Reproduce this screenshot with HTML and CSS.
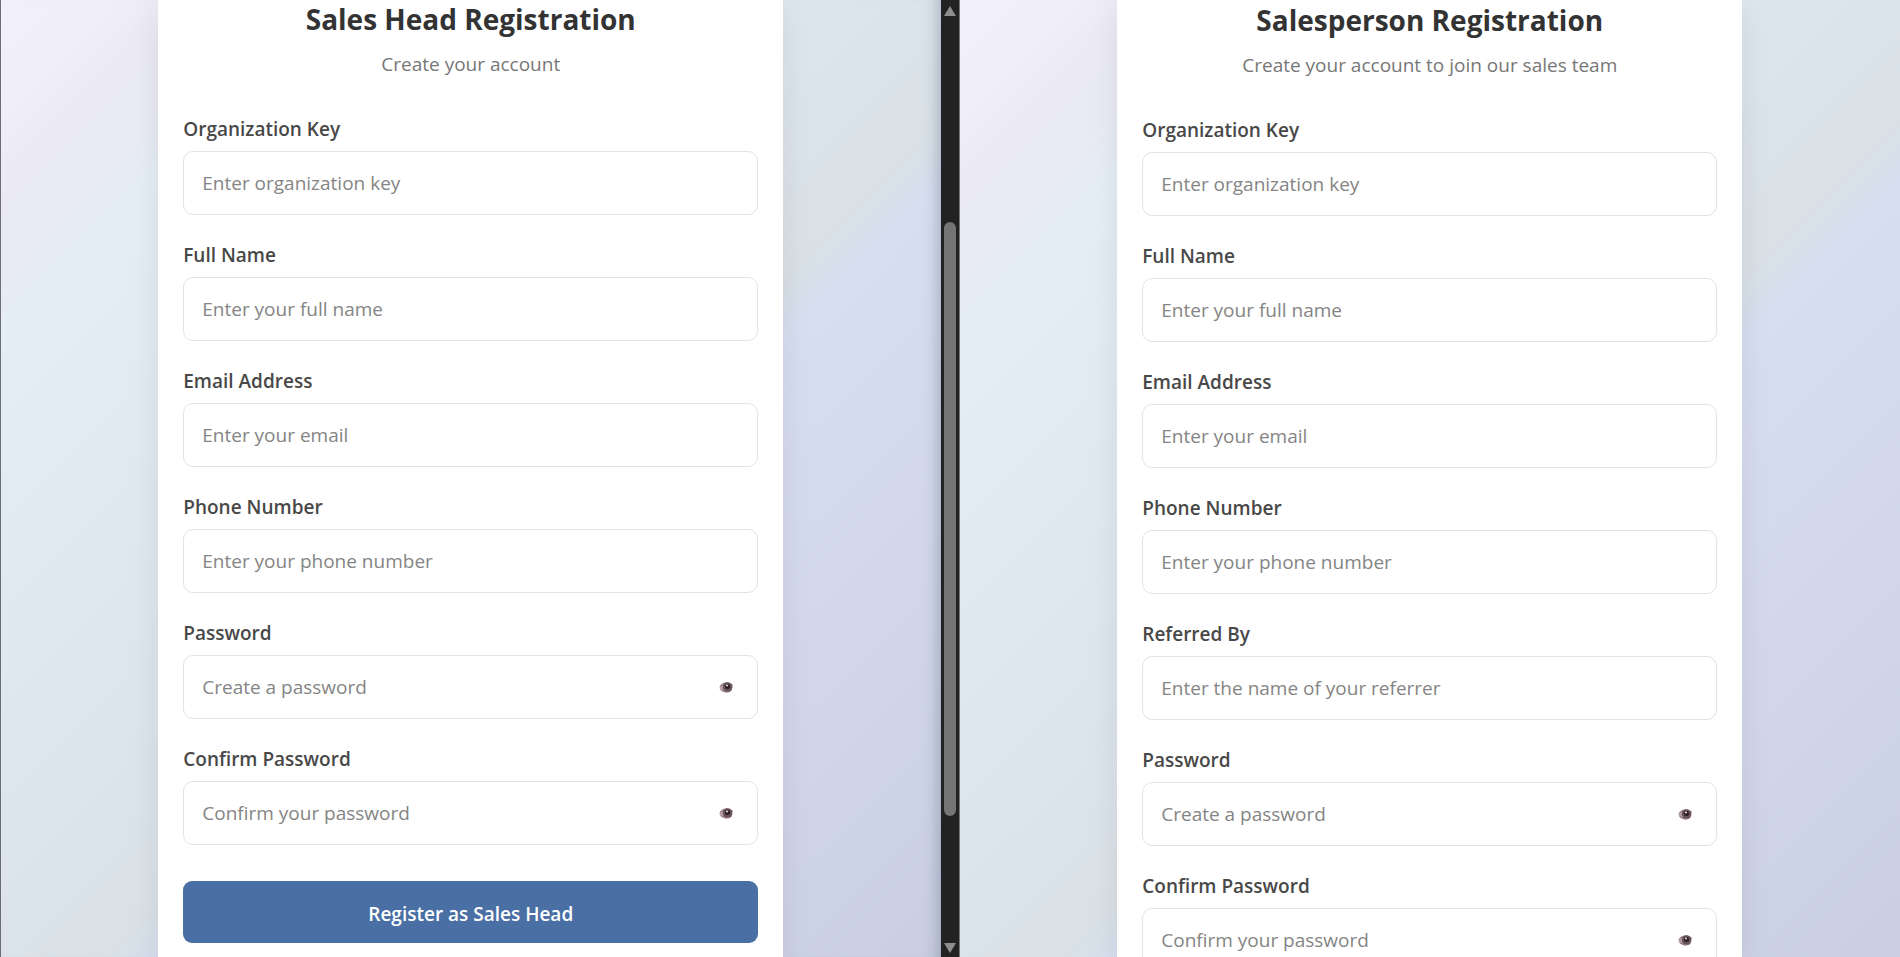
FILE: index.html
```html
<!DOCTYPE html>
<html lang="en">
<head>
<meta charset="utf-8">
<title>Registration</title>
<link rel="stylesheet" href="styles.css">
</head>
<body>
<svg width="0" height="0" class="sprite" aria-hidden="true">
  <symbol id="eye" viewBox="0 0 16 14">
    <ellipse cx="7" cy="7.5" rx="6.5" ry="5" fill="#b9a3a9"/>
    <path d="M1 6.500Q7 0 14 5.500" fill="none" stroke="#8c777e" stroke-width="1"/>
    <circle cx="8.500" cy="7" r="4.800" fill="#69535a"/>
    <circle cx="8.500" cy="6.500" r="2.500" fill="#2c1d24"/>
    <circle cx="8" cy="5.500" r="1" fill="#efe9ec"/>
    <path d="M2 9.500Q7 14 12.500 10.500" fill="none" stroke="#8c6f78" stroke-width="1"/>
  </symbol>
</svg>
<main class="split">
  <section class="pane pane-left">
    <form class="card">
      <h1 class="title">Sales Head Registration</h1>
      <p class="subtitle">Create your account</p>
      <div class="fields">
        <div class="field"><label for="h-org">Organization Key</label><input id="h-org" type="text" placeholder="Enter organization key"></div>
        <div class="field"><label for="h-name">Full Name</label><input id="h-name" type="text" placeholder="Enter your full name"></div>
        <div class="field"><label for="h-email">Email Address</label><input id="h-email" type="email" placeholder="Enter your email"></div>
        <div class="field"><label for="h-phone">Phone Number</label><input id="h-phone" type="tel" placeholder="Enter your phone number"></div>
        <div class="field"><label for="h-pass">Password</label><div class="secret"><input id="h-pass" type="password" placeholder="Create a password"><button type="button" class="toggle" aria-label="Show password"><svg><use href="#eye"/></svg></button></div></div>
        <div class="field"><label for="h-conf">Confirm Password</label><div class="secret"><input id="h-conf" type="password" placeholder="Confirm your password"><button type="button" class="toggle" aria-label="Show password"><svg><use href="#eye"/></svg></button></div></div>
      </div>
      <button type="submit" class="submit">Register as Sales Head</button>
    </form>
  </section>
  <div class="scrollbar" aria-hidden="true">
    <span class="arrow arrow-up"></span>
    <span class="track-top"></span>
    <span class="thumb"></span>
    <span class="track-bottom"></span>
    <span class="arrow arrow-down"></span>
  </div>
  <section class="pane pane-right">
    <form class="card">
      <h1 class="title">Salesperson Registration</h1>
      <p class="subtitle">Create your account to join our sales team</p>
      <div class="fields">
        <div class="field"><label for="s-org">Organization Key</label><input id="s-org" type="text" placeholder="Enter organization key"></div>
        <div class="field"><label for="s-name">Full Name</label><input id="s-name" type="text" placeholder="Enter your full name"></div>
        <div class="field"><label for="s-email">Email Address</label><input id="s-email" type="email" placeholder="Enter your email"></div>
        <div class="field"><label for="s-phone">Phone Number</label><input id="s-phone" type="tel" placeholder="Enter your phone number"></div>
        <div class="field"><label for="s-ref">Referred By</label><input id="s-ref" type="text" placeholder="Enter the name of your referrer"></div>
        <div class="field"><label for="s-pass">Password</label><div class="secret"><input id="s-pass" type="password" placeholder="Create a password"><button type="button" class="toggle" aria-label="Show password"><svg><use href="#eye"/></svg></button></div></div>
        <div class="field"><label for="s-conf">Confirm Password</label><div class="secret"><input id="s-conf" type="password" placeholder="Confirm your password"><button type="button" class="toggle" aria-label="Show password"><svg><use href="#eye"/></svg></button></div></div>
      </div>
    </form>
  </section>
</main>
</body>
</html>
```
FILE: styles.css
```css
* { box-sizing: border-box; }

body {
  margin: 0;
  font-family: "Segoe UI", "Open Sans", "Noto Sans", sans-serif;
  font-size: 19px;
  line-height: 26px;
  color: #333;
}

.sprite { position: absolute; }

.split {
  display: grid;
  grid-template-columns: 1fr 19px 1fr;
  height: 100vh;
  overflow: hidden;
}

.pane {
  display: flex;
  justify-content: center;
  min-width: 0;
  overflow: hidden;
  background: linear-gradient(135deg, #f2f0fb 0%, #f0eef9 6%, #ebeaf5 9%, #e9eaf4 14%, #e5edf5 17%, #e3ebf2 27%, #dde5ec 45%, #d9e1e7 56%, #d7deef 59%, #d1d7e9 80%, #c9cee2 100%);
}

.pane-left {
  border-left: 1px solid #6d6c78;
  box-shadow: inset -16px 0 16px -14px rgba(60, 70, 90, 0.35);
}

.card {
  width: 100%;
  max-width: 625px;
  min-height: 100%;
  padding: 0 25px;
  background: #fff;
  box-shadow: 0 10px 30px rgba(0, 0, 0, 0.08);
}

.pane-right .card { padding-top: 1px; }

.title {
  margin: 0 0 13px;
  font-size: 28px;
  line-height: 38px;
  font-weight: 700;
  text-align: center;
}

.subtitle {
  margin: 0 0 39px;
  text-align: center;
  color: #777;
}

.fields {
  display: flex;
  flex-direction: column;
  gap: 27px;
}

.field {
  display: flex;
  flex-direction: column;
  gap: 9px;
}

.field label {
  font-weight: 600;
  color: #484848;
}

.field input {
  width: 100%;
  height: 64px;
  padding: 0 18px;
  border: 1px solid #e3e3e5;
  border-radius: 10px;
  background: #fff;
  font: inherit;
  color: #333;
}

.field input::placeholder { color: #858585; opacity: 1; }

.secret { position: relative; }

.toggle {
  position: absolute;
  inset: 0 18px 0 auto;
  display: flex;
  align-items: center;
  justify-content: center;
  width: 26px;
  padding: 0;
  border: 0;
  background: none;
}

.toggle svg { width: 16px; height: 14px; }

.submit {
  width: 100%;
  height: 62px;
  margin-top: 36px;
  padding: 4px 0 0;
  border: 0;
  border-radius: 9px;
  background: #4a6fa5;
  color: #fff;
  font: inherit;
  font-weight: 600;
}

.scrollbar {
  display: flex;
  flex-direction: column;
  align-items: center;
  padding: 6px 0 4px;
  border-left: 1px solid #17242f;
  border-right: 1px solid #77777c;
  background: #222;
}

.arrow {
  border-left: 6px solid transparent;
  border-right: 6px solid transparent;
}

.arrow-up { border-bottom: 10px solid #8d8d8d; }
.arrow-down { border-top: 10px solid #8d8d8d; }

.track-top { flex: 206; }
.track-bottom { flex: 127; }

.thumb {
  flex: 595;
  width: 12px;
  border-radius: 6px;
  background: #747474;
}
```
